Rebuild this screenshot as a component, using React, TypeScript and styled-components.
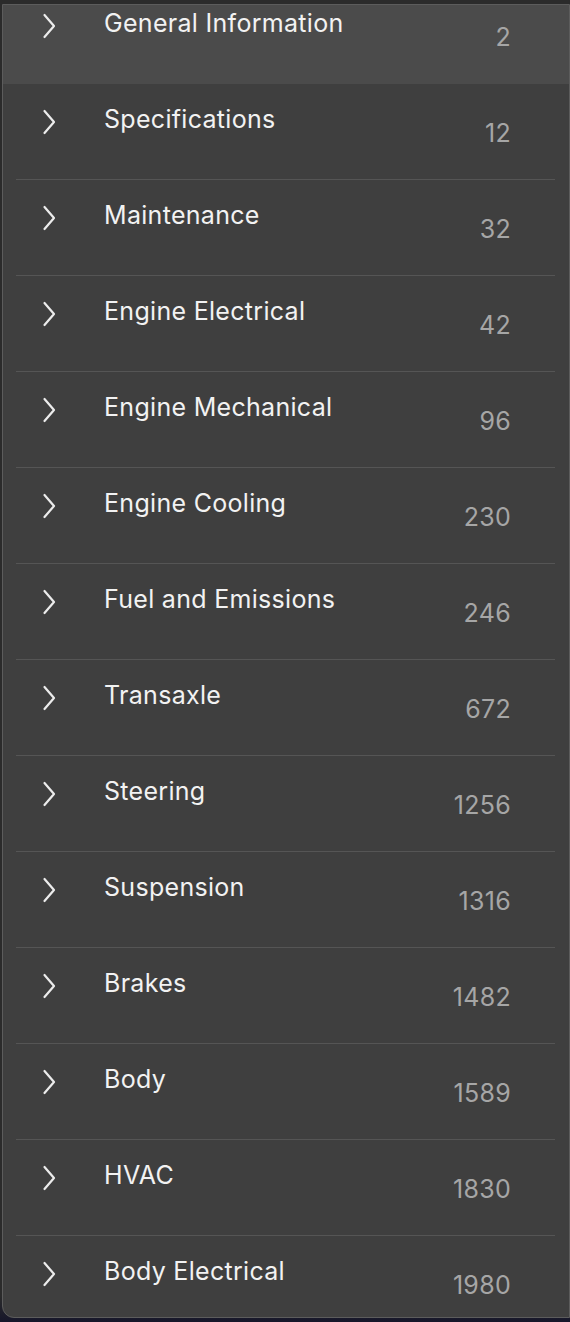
import * as React from 'react';
import styled, { createGlobalStyle } from 'styled-components';

type Section = {
    title: string;
    page: number;
};

const sections: Section[] = [
    { title: 'General Information', page: 2 },
    { title: 'Specifications', page: 12 },
    { title: 'Maintenance', page: 32 },
    { title: 'Engine Electrical', page: 42 },
    { title: 'Engine Mechanical', page: 96 },
    { title: 'Engine Cooling', page: 230 },
    { title: 'Fuel and Emissions', page: 246 },
    { title: 'Transaxle', page: 672 },
    { title: 'Steering', page: 1256 },
    { title: 'Suspension', page: 1316 },
    { title: 'Brakes', page: 1482 },
    { title: 'Body', page: 1589 },
    { title: 'HVAC', page: 1830 },
    { title: 'Body Electrical', page: 1980 },
];

const GlobalStyle = createGlobalStyle`
    html, body {
        margin: 0;
        padding: 0;
        background: #2b2b2b;
        font-family: Inter, "Liberation Sans", Arial, sans-serif;
        -webkit-font-smoothing: antialiased;
    }
`;

const Page = styled.div`
    width: 570px;
    height: 1322px;
    overflow: hidden;
    background: linear-gradient(to bottom, #2b2b2b 0%, #2b2b2b 98%, #16162a 100%);
`;

const Panel = styled.div`
    margin: 4px 0 0 2px;
    width: 566px;
    height: 1312px;
    border: 1px solid #5c5c5c;
    border-radius: 0 0 0 12px;
    background: #3f3f3f;
    overflow: hidden;
`;

const List = styled.ul`
    list-style: none;
    margin: -17px 0 0;
    padding: 0;
`;

const Row = styled.li<{ $active?: boolean }>`
    position: relative;
    display: flex;
    align-items: flex-start;
    height: 96px;
    box-sizing: border-box;
    background: ${(p) => (p.$active ? '#4b4b4b' : 'transparent')};

    &::after {
        content: '';
        display: ${(p) => (p.$active ? 'none' : 'block')};
        position: absolute;
        left: 13px;
        right: 14px;
        bottom: 0;
        height: 1px;
        background: #555555;
    }
`;

const Chevron = styled.svg`
    flex: none;
    width: 14px;
    height: 26px;
    margin: 25px 0 0 39px;
`;

const Title = styled.span`
    flex: 1;
    margin: 19px 0 0 48px;
    font-size: 25px;
    line-height: 32px;
    letter-spacing: 0.3px;
    color: #f2f2f2;
`;

const PageNumber = styled.span`
    margin: 33px 58px 0 0;
    font-size: 25px;
    line-height: 32px;
    letter-spacing: 0.3px;
    color: #a6a6a6;
`;

const ChevronIcon = () => (
    <Chevron viewBox="0 0 14 26" fill="none">
        <path
            d="M2.5 2 L12 13 L2.5 24"
            stroke="#ececec"
            strokeWidth="2.2"
            strokeLinecap="round"
            strokeLinejoin="round"
        />
    </Chevron>
);

export default function App() {
    return (
        <Page>
            <GlobalStyle />
            <Panel>
                <List>
                    {sections.map((section, i) => (
                        <Row key={section.title} $active={i === 0}>
                            <ChevronIcon />
                            <Title>{section.title}</Title>
                            <PageNumber>{section.page}</PageNumber>
                        </Row>
                    ))}
                </List>
            </Panel>
        </Page>
    );
}
